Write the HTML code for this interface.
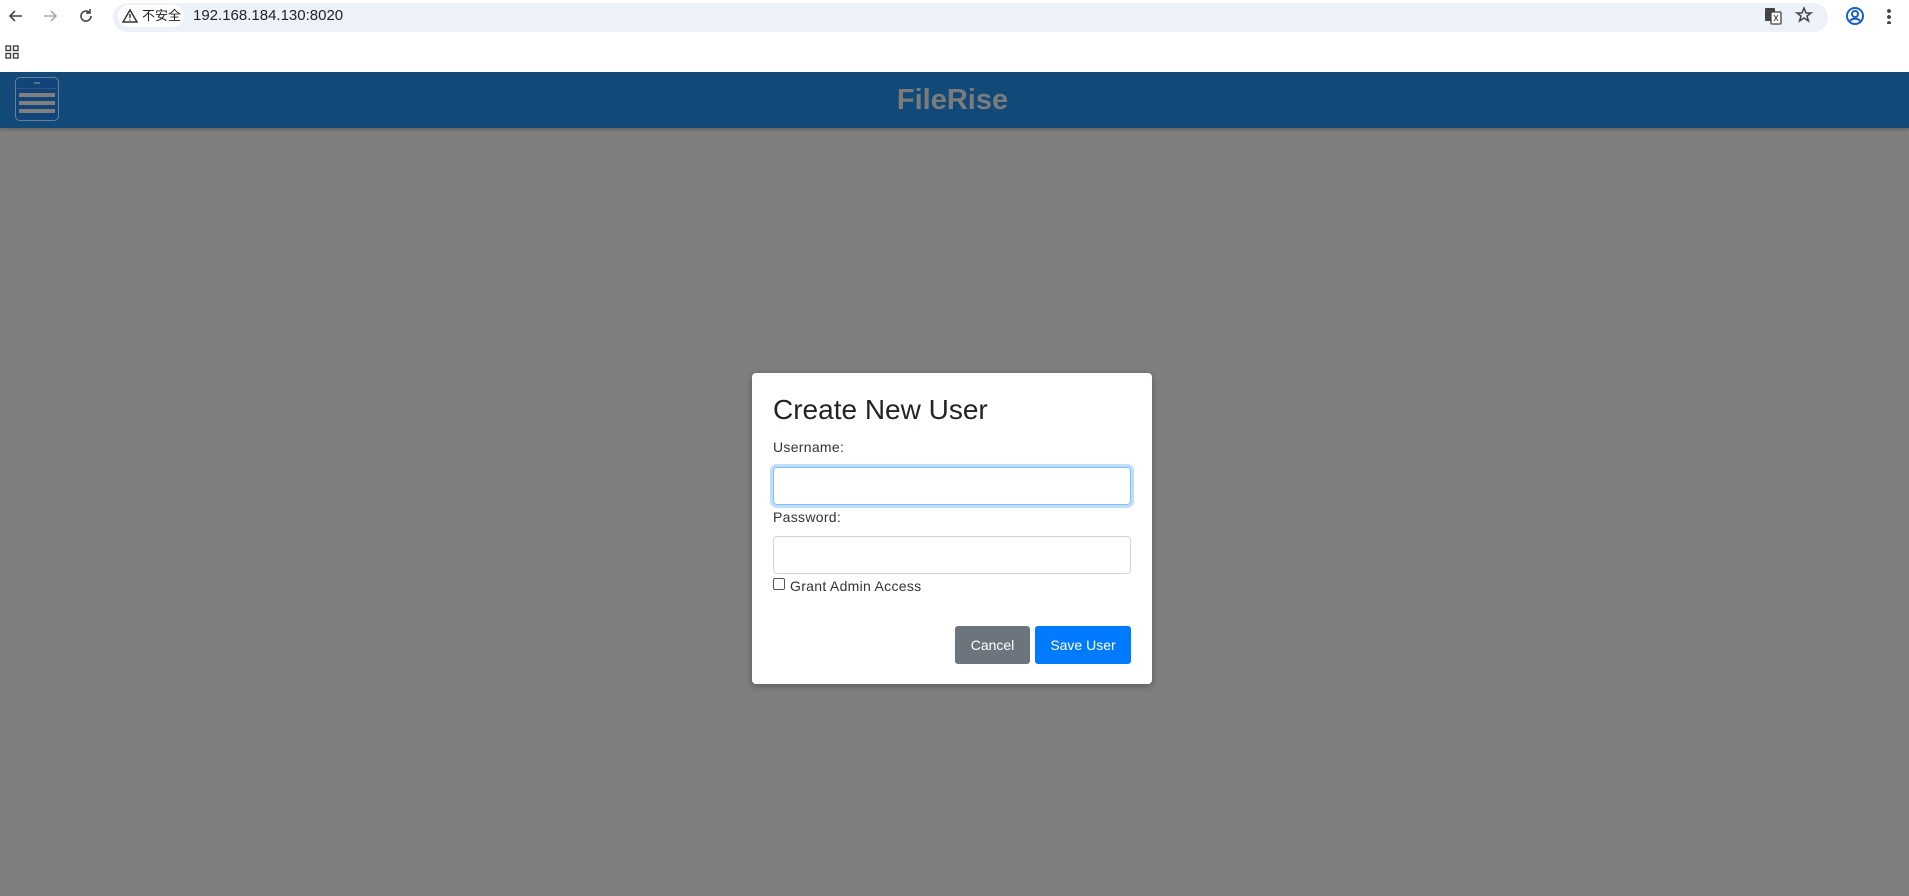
<!DOCTYPE html>
<html><head><meta charset="utf-8"><style>
*{box-sizing:border-box;margin:0;padding:0}
body{width:1909px;height:896px;overflow:hidden;background:#7f7f7f;font-family:"Liberation Sans","Noto Sans CJK SC",sans-serif;position:relative}
.abs{position:absolute}
</style></head><body>
<div class="abs" style="left:0;top:0;width:1909px;height:72px;background:#fff"></div>
<div class="abs" style="left:113px;top:3px;width:1715px;height:29px;background:#edf1fa;border-radius:15px"></div>
<div class="abs" style="left:118px;top:5px;width:66px;height:22px;background:#fff;border-radius:11px;font-size:13px;line-height:22px;padding-left:24px;color:#222">不安全</div>
<svg class="abs" style="left:122px;top:8px" width="16" height="16" viewBox="0 0 16 16"><path d="M8 2L15 14H1Z" fill="none" stroke="#333" stroke-width="1.5"/><path d="M8 6v4M8 11.5v1" stroke="#333" stroke-width="1.5"/></svg>
<div class="abs" style="left:193px;top:5px;font-size:15px;line-height:22px;color:#222">192.168.184.130:8020</div>
<svg class="abs" style="left:6px;top:6px" width="20" height="20" viewBox="0 0 20 20"><path d="M16 10H4M9 5l-5 5 5 5" fill="none" stroke="#444" stroke-width="1.6"/></svg>
<svg class="abs" style="left:40px;top:6px" width="20" height="20" viewBox="0 0 20 20"><path d="M4 10h12M11 5l5 5-5 5" fill="none" stroke="#aaa" stroke-width="1.6"/></svg>
<svg class="abs" style="left:76px;top:6px" width="20" height="20" viewBox="0 0 20 20"><path d="M15 10a5 5 0 1 1-1.5-3.5M14 3v4h-4" fill="none" stroke="#444" stroke-width="1.6"/></svg>
<svg class="abs" style="left:1763px;top:6px" width="20" height="20" viewBox="0 0 20 20"><rect x="2" y="2" width="10" height="13" rx="1" fill="#444"/><rect x="8" y="6" width="10" height="12" rx="1" fill="#fff" stroke="#444" stroke-width="1.3"/><path d="M11 9l4 6M15 9l-4 6" stroke="#444"/></svg>
<svg class="abs" style="left:1794px;top:5px" width="20" height="20" viewBox="0 0 20 20"><path d="M10 3l2 5h5l-4 3 1.5 5L10 13l-4.5 3L7 11 3 8h5z" fill="none" stroke="#444" stroke-width="1.5"/></svg>
<svg class="abs" style="left:1844px;top:5px" width="22" height="22" viewBox="0 0 22 22"><circle cx="11" cy="11" r="8" fill="none" stroke="#1a5fd0" stroke-width="2"/><circle cx="11" cy="9" r="3" fill="none" stroke="#1a5fd0" stroke-width="2"/><path d="M6 16c2-3 8-3 10 0" fill="none" stroke="#1a5fd0" stroke-width="2"/></svg>
<div class="abs" style="left:1887px;top:8px;width:4px;height:16px;background:radial-gradient(circle,#444 1.8px,transparent 2px) 0 0/4px 6px"></div>
<svg class="abs" style="left:5px;top:45px" width="14" height="14" viewBox="0 0 14 14" fill="none" stroke="#444" stroke-width="1.4"><rect x="1" y="1" width="4.5" height="4.5"/><rect x="8.5" y="1" width="4.5" height="4.5"/><rect x="1" y="8.5" width="4.5" height="4.5"/><rect x="8.5" y="8.5" width="4.5" height="4.5"/></svg>
<div class="abs" style="left:0;top:72px;width:1909px;height:56px;background:#114a79;box-shadow:0 2px 3px rgba(0,0,0,.2)"></div>
<div class="abs" style="left:15px;top:77px;width:44px;height:44px;border:1.5px solid #6b7f95;border-radius:5px;background:#11457a">
<div class="abs" style="left:0;top:10px;width:41px;border-top:1px solid #2c5580"></div>
<div class="abs" style="left:18px;top:4px;width:6px;height:2px;background:#5a6f88"></div>
<div class="abs" style="left:3px;top:15px;width:36px;height:4px;background:#7f7f7f"></div>
<div class="abs" style="left:3px;top:23px;width:36px;height:4px;background:#7f7f7f"></div>
<div class="abs" style="left:3px;top:31px;width:36px;height:4px;background:#7f7f7f"></div>
</div>
<div class="abs" style="left:0;top:80px;width:1909px;text-align:center;font-size:29px;font-weight:bold;color:#7b7b7b;line-height:40px;padding-right:4px">FileRise</div>
<div class="abs" style="left:752px;top:373px;width:400px;height:311px;background:#fff;border-radius:4px;box-shadow:0 2px 8px rgba(0,0,0,.3)"></div>
<div class="abs" style="left:773px;top:393px;font-size:28px;color:#212529;line-height:34px">Create New User</div>
<div class="abs" style="left:773px;top:438px;font-size:14px;color:#333;line-height:18px;letter-spacing:.3px">Username:</div>
<div class="abs" style="left:773px;top:467px;width:358px;height:38px;border:1px solid #80bdff;border-radius:4px;box-shadow:0 0 0 3px rgba(0,123,255,.25)"></div>
<div class="abs" style="left:773px;top:508px;font-size:14px;color:#333;line-height:18px;letter-spacing:.3px">Password:</div>
<div class="abs" style="left:773px;top:536px;width:358px;height:38px;border:1px solid #ced4da;border-radius:4px"></div>
<div class="abs" style="left:773px;top:578px;width:12px;height:12px;border:1px solid #555;border-radius:2px"></div>
<div class="abs" style="left:790px;top:577px;font-size:14px;color:#333;line-height:18px;letter-spacing:.3px">Grant Admin Access</div>
<div class="abs" style="left:955px;top:626px;width:75px;height:38px;background:#6c757d;border-radius:3px;color:#fff;font-size:14px;line-height:38px;text-align:center">Cancel</div>
<div class="abs" style="left:1035px;top:626px;width:96px;height:38px;background:#007bff;border-radius:3px;color:#fff;font-size:14px;line-height:38px;text-align:center">Save User</div>
</body></html>
